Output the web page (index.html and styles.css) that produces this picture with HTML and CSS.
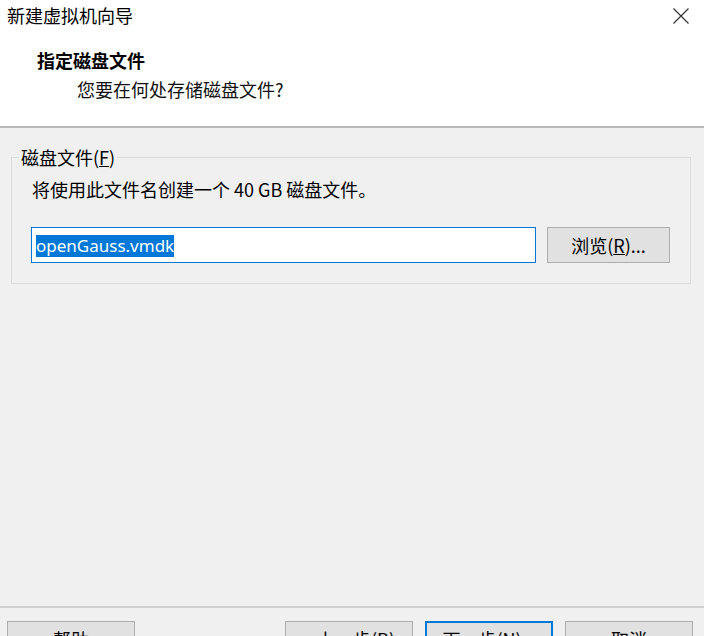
FILE: index.html
```html
<!DOCTYPE html>
<html lang="zh-CN">
<head>
<meta charset="utf-8">
<title>新建虚拟机向导</title>
<link rel="stylesheet" href="styles.css">
</head>
<body>
<div class="window">
  <header class="header">
    <div class="titlebar">
      <span class="title">新建虚拟机向导</span>
      <svg class="close" width="16" height="16" viewBox="0 0 16 16"><path d="M0.5 0.5 L15.5 15.5 M15.5 0.5 L0.5 15.5" stroke="#333" stroke-width="1.2" fill="none"/></svg>
    </div>
    <div class="heading">指定磁盘文件</div>
    <div class="subheading">您要在何处存储磁盘文件?</div>
  </header>
  <main class="main">
    <fieldset class="group">
      <legend class="legend">磁盘文件(<u>F</u>)</legend>
      <div class="desc">将使用此文件名创建一个 40 GB 磁盘文件。</div>
      <div class="row">
        <div class="input"><span class="sel">openGauss.vmdk</span></div>
        <div class="btn browse">浏览(<u>R</u>)...</div>
      </div>
    </fieldset>
  </main>
  <footer class="footer">
    <div class="btn fbtn">帮助</div>
    <div class="spacer"></div>
    <div class="btn fbtn">&lt; 上一步(<u>B</u>)</div>
    <div class="btn fbtn primary">下一步(<u>N</u>) &gt;</div>
    <div class="btn fbtn">取消</div>
  </footer>
</div>
</body>
</html>
```

FILE: styles.css
```css
html, body {
  margin: 0;
  padding: 0;
  width: 704px;
  height: 636px;
  overflow: hidden;
  background: #f0f0f0;
}
body {
  font-family: "Noto Sans CJK SC", "Noto Sans", sans-serif;
  font-size: 18px;
  color: #000;
}
.window {
  display: flex;
  flex-direction: column;
  height: 670px;
}
.header {
  background: #fff;
  border-bottom: 2px solid #b9b9b9;
  box-sizing: border-box;
  height: 128px;
}
.titlebar {
  display: flex;
  justify-content: space-between;
  align-items: center;
  padding: 3px 15px 0 7px;
  height: 24px;
}
.title {
  line-height: 24px;
}
.close {
  margin-top: 2px;
}
.heading {
  font-weight: 700;
  line-height: 24px;
  margin-top: 21px;
  padding-left: 37px;
}
.subheading {
  line-height: 24px;
  margin-top: 5px;
  padding-left: 77px;
  color: #111;
}
.main {
  flex: 1;
}
.group {
  margin: 19px 13px 0 11px;
  padding: 10px 19px 20px 19px;
  border: 1px solid #dcdcdc;
  min-width: 0;
}
.legend {
  margin-left: -12px;
  padding: 0 2px;
  line-height: 20px;
}
.desc {
  line-height: 24px;
  padding-left: 1px;
}
.row {
  display: flex;
  gap: 11px;
  margin-top: 26px;
}
.input {
  width: 505px;
  height: 36px;
  box-sizing: border-box;
  border: 1px solid #0078d7;
  background: #fff;
  padding: 3px 0 0 4px;
}
.sel {
  display: inline-block;
  background: #0078d7;
  color: #fff;
  font-family: "Noto Sans", sans-serif;
  font-size: 17px;
  line-height: 22px;
}
.btn {
  background: #e1e1e1;
  border: 1px solid #adadad;
  box-sizing: border-box;
  display: flex;
  align-items: center;
  justify-content: center;
}
.browse {
  width: 123px;
  height: 36px;
}
.footer {
  border-top: 2px solid #d0d0d0;
  display: flex;
  gap: 12px;
  padding: 13px 11px 13px 7px;
}
.spacer {
  flex: 1;
}
.fbtn {
  width: 128px;
  height: 36px;
}
.primary {
  border-color: #0078d7;
  box-shadow: inset 0 0 0 1px #0078d7;
}
```
